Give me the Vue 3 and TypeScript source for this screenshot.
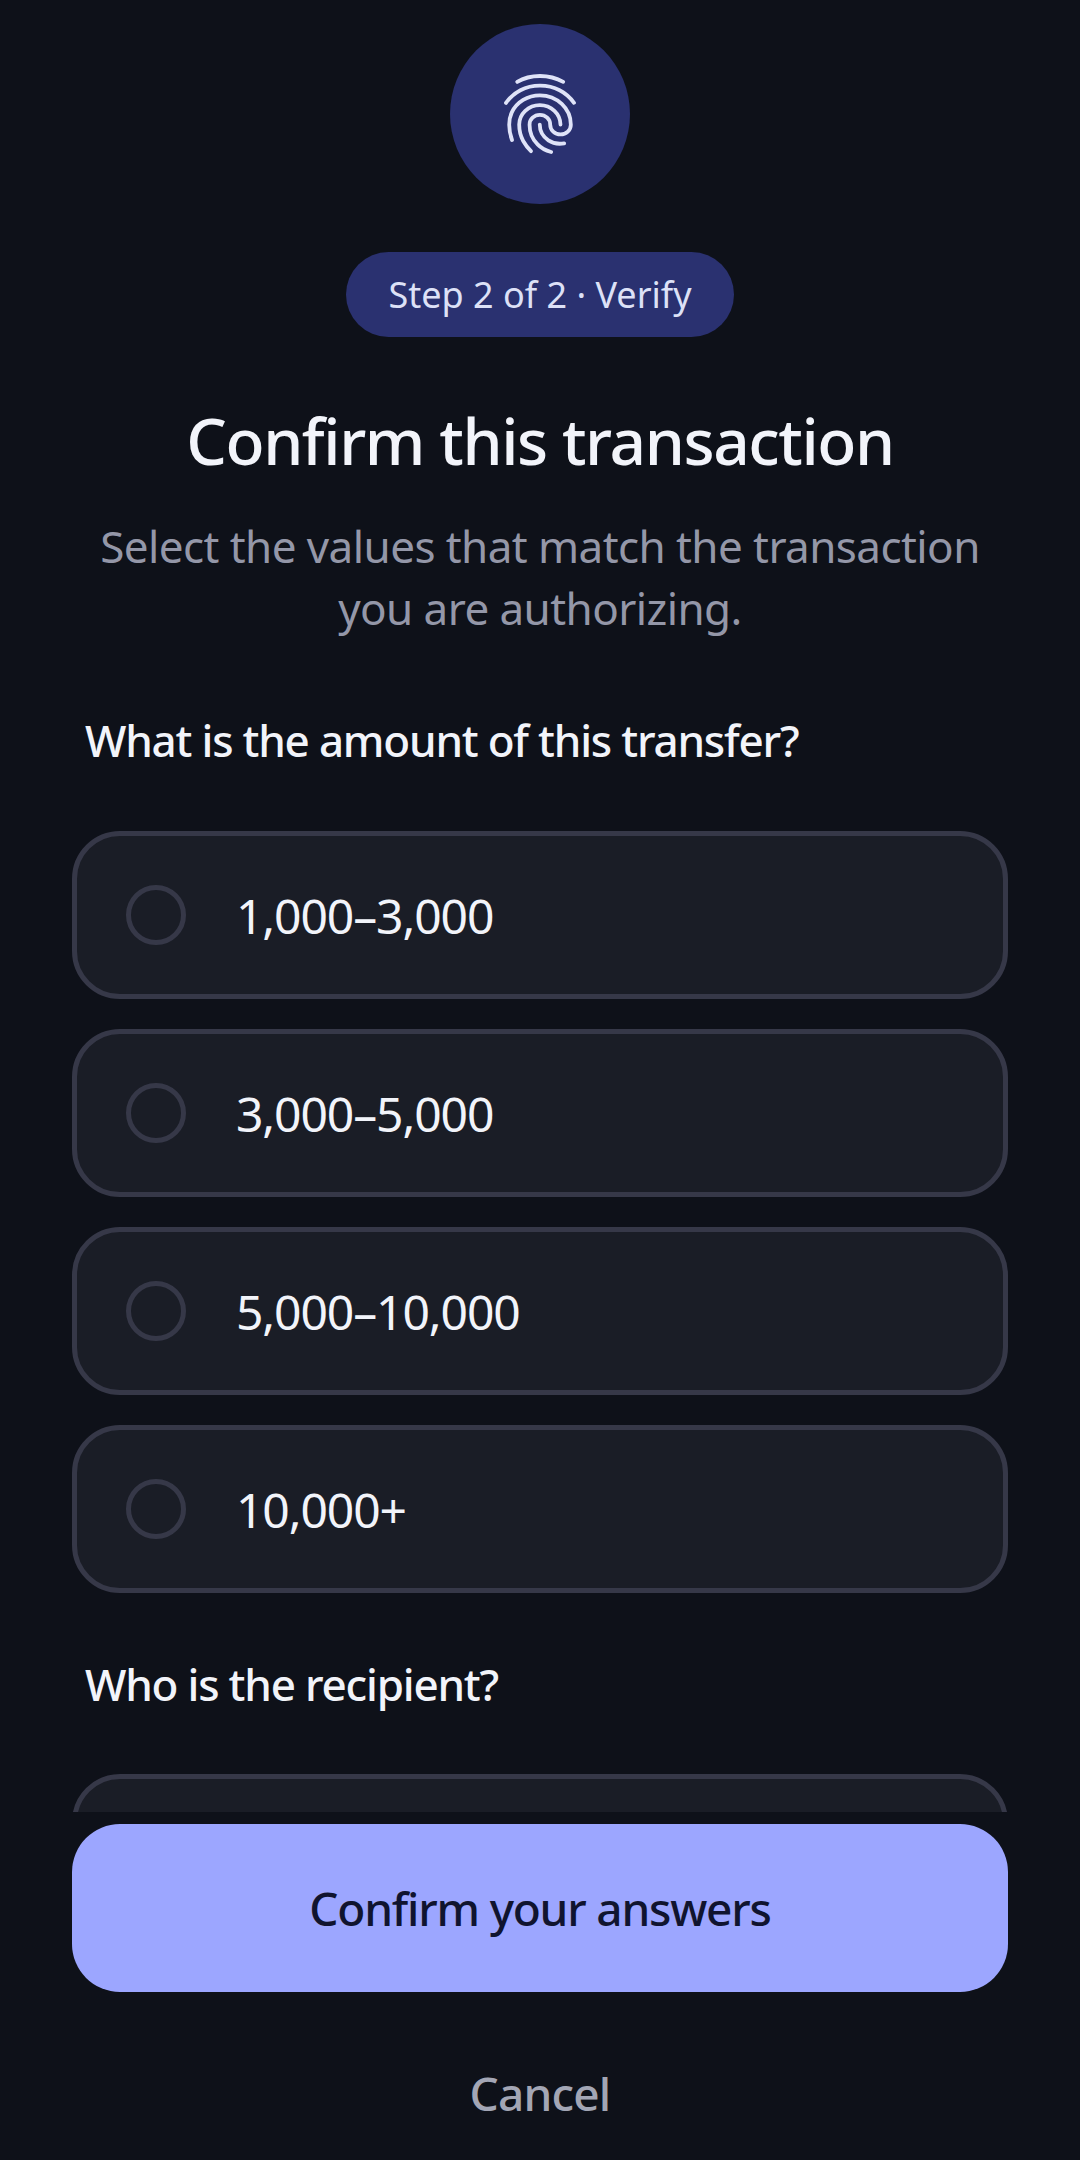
<script setup lang="ts">
const q1: string[] = ['1,000–3,000', '3,000–5,000', '5,000–10,000', '10,000+']
</script>

<template>
  <div class="screen">
    <div class="scroll">
      <div class="avatar">
        <svg class="fp" viewBox="0 0 24 24" fill="none" stroke="#dfe3f8" stroke-width="0.95" stroke-linecap="round">
          <path d="M6.3 3.97C7.95 2.97 9.9 2.5 12 2.5C14.1 2.5 16 2.95 17.8 3.97" />
          <path d="M3.5 9.22C4.45 7.87 5.65 6.8 7.1 6.05C10 4.55 14 4.55 16.9 6.05C18.35 6.8 19.55 7.85 20.5 9.2" />
          <path d="M9.75 21.29C8.9 20.45 8.45 19.9 7.8 18.75C7.15 17.55 6.8 16.15 6.8 14.65C6.8 11.95 9.1 9.76 11.96 9.76C14.8 9.76 17.12 11.95 17.12 14.65" />
          <path d="M11.94 14.65C11.94 16.2 12.75 17.7 14.1 18.6C14.9 19.15 15.85 19.44 16.92 19.44C17.1 19.44 17.6 19.42 18.05 19.33" />
          <path d="M14.78 21.5C13.3 21.1 12.3 20.55 11.4 19.6C10.1 18.3 9.39 16.6 9.39 14.66C9.39 13.3 10.55 12.22 11.97 12.22C13.4 12.22 14.55 13.3 14.55 14.66C14.55 16 15.7 17.1 17.13 17.1C18.55 17.1 19.71 16 19.71 14.66C19.71 10.6 16.25 7.33 11.96 7.33C8.95 7.33 6.2 9 4.95 11.6C4.52 12.5 4.3 13.55 4.3 14.66C4.3 15.95 4.53 17.2 5 18.5" />
        </svg>
      </div>
      <div class="pill">Step 2 of 2 · Verify</div>
      <h1 class="title">Confirm this transaction</h1>
      <p class="sub">Select the values that match the transaction<br />you are authorizing.</p>
      <h2 class="q q1">What is the amount of this transfer?</h2>
      <div class="opts">
        <div v-for="o in q1" :key="o" class="opt">
          <span class="radio"></span>
          <span class="label">{{ o }}</span>
        </div>
      </div>
      <h2 class="q q2">Who is the recipient?</h2>
      <div class="opts"><div class="opt"></div></div>
    </div>
    <div class="footer">
      <button class="confirm">Confirm your answers</button>
      <button class="cancel">Cancel</button>
    </div>
  </div>
</template>

<style>
html, body { margin: 0; background: #0e1119; }
</style>

<style scoped>
.screen {
  width: 1080px;
  height: 2160px;
  background: #0e1119;
  font-family: "Noto Sans", sans-serif;
  color: #f2f4fa;
  display: flex;
  flex-direction: column;
  overflow: hidden;
}
.scroll {
  height: 1812px;
  overflow: hidden;
  padding: 24px 72px 0;
  box-sizing: border-box;
  display: flex;
  flex-direction: column;
  align-items: center;
  flex: none;
}
.avatar {
  width: 180px;
  height: 180px;
  border-radius: 50%;
  background: #2a3170;
  display: flex;
  align-items: center;
  justify-content: center;
  flex: none;
}
.fp { width: 96px; height: 96px; }
.pill {
  margin-top: 48px;
  height: 85px;
  padding: 0 42px;
  border-radius: 43px;
  background: #2a3170;
  color: #dde1f7;
  font-size: 36px;
  display: flex;
  align-items: center;
  flex: none;
}
.title {
  margin: 62px 0 0;
  font-size: 64px;
  font-weight: 500;
  letter-spacing: -1.4px;
  line-height: 84px;
  text-align: center;
}
.sub {
  margin: 32px 0 0;
  font-size: 44px;
  letter-spacing: -0.57px;
  line-height: 62px;
  color: #9497a8;
  text-align: center;
}
.q {
  align-self: stretch;
  margin: 0;
  padding-left: 13px;
  font-size: 44px;
  font-weight: 500;
  letter-spacing: -1.2px;
  line-height: 60px;
}
.q1 { margin-top: 71px; }
.q2 { margin-top: 61px; }
.opts {
  align-self: stretch;
  margin-top: 61px;
  display: flex;
  flex-direction: column;
  gap: 30px;
}
.q2 + .opts { margin-top: 60px; }
.opt {
  height: 168px;
  box-sizing: border-box;
  flex: none;
  border: 5px solid #363848;
  border-radius: 48px;
  background: #1a1d26;
  display: flex;
  align-items: center;
  padding-left: 49px;
  gap: 50px;
}
.radio {
  width: 60px;
  height: 60px;
  box-sizing: border-box;
  border: 5px solid #363848;
  border-radius: 50%;
  flex: none;
}
.label {
  font-size: 48px;
  font-weight: 400;
  letter-spacing: -1.1px;
}
.footer {
  padding: 12px 72px 0;
  display: flex;
  flex-direction: column;
}
.confirm {
  height: 168px;
  border: 0;
  border-radius: 48px;
  background: #9ca6ff;
  color: #10142f;
  font: 500 46px "Noto Sans", sans-serif;
  letter-spacing: -1.2px;
}
.cancel {
  margin-top: 46px;
  height: 110px;
  border: 0;
  background: none;
  color: #a3a6b5;
  font: 500 46px "Noto Sans", sans-serif;
  letter-spacing: -0.8px;
}
</style>
